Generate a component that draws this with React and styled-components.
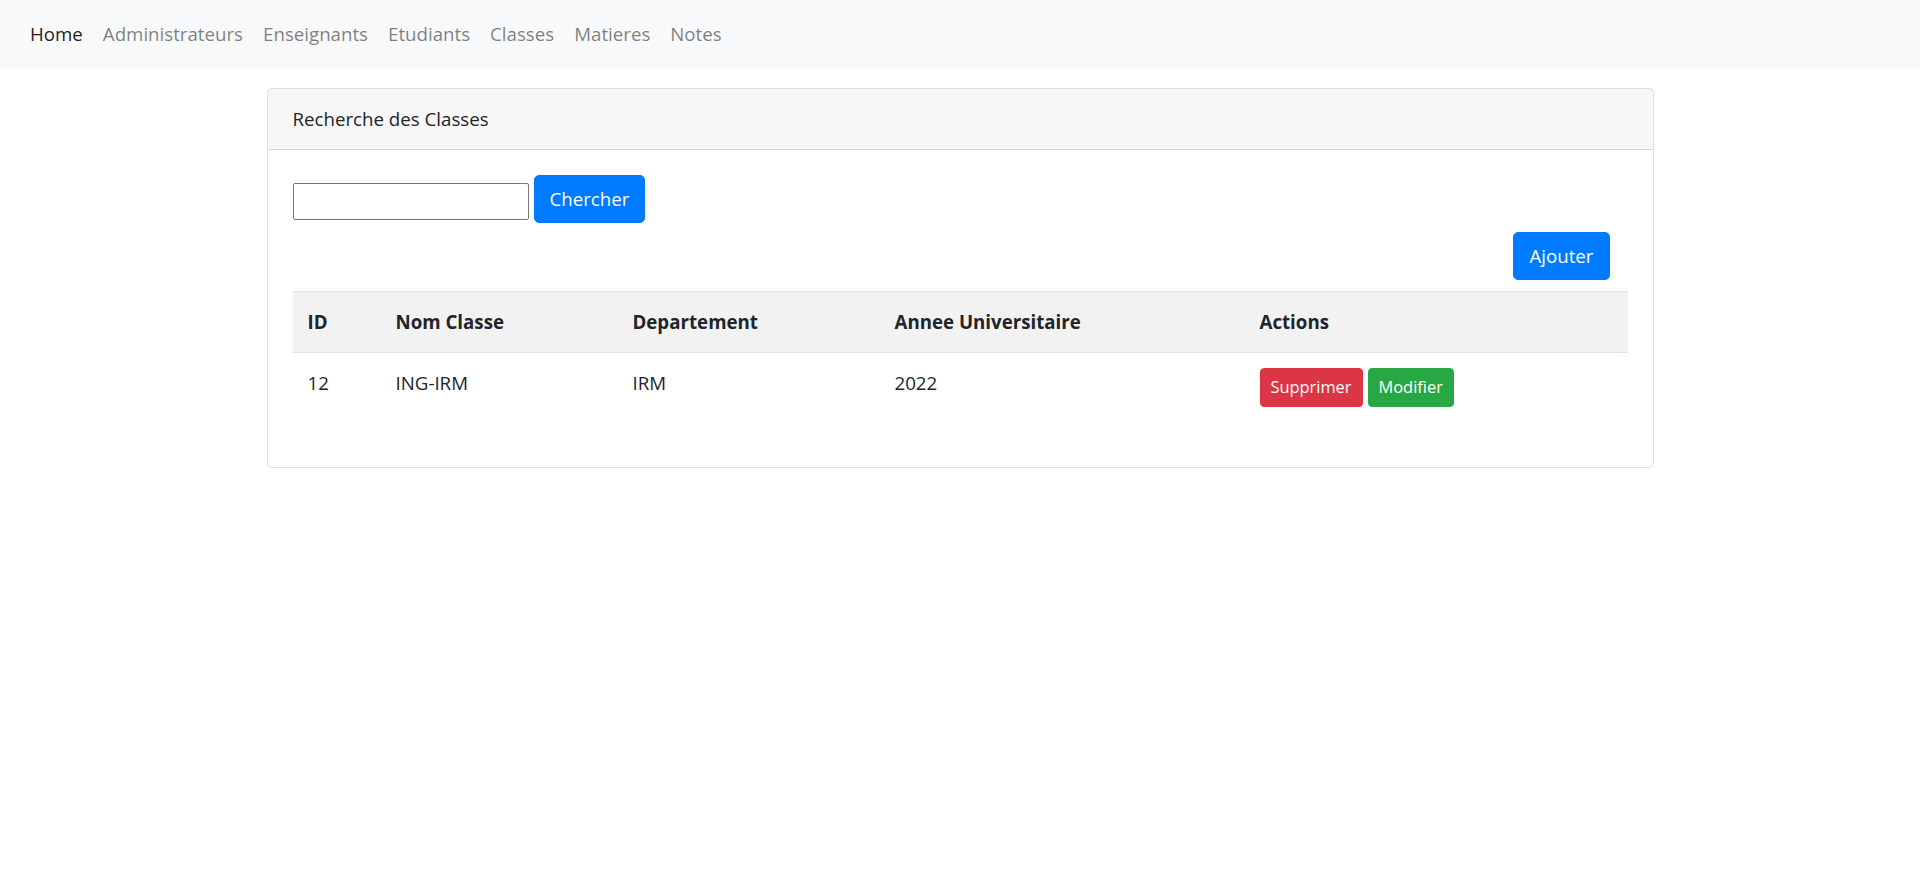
import React from 'react'
import styled, { createGlobalStyle } from 'styled-components'

const GlobalStyle = createGlobalStyle`
  body {
    margin: 0;
    font-family: 'Open Sans', 'Noto Sans', sans-serif;
    font-size: 18.7px;
    line-height: 30px;
    color: #212529;
    background: #ffffff;
  }
  * {
    box-sizing: border-box;
  }
`

const links = ['Home', 'Administrateurs', 'Enseignants', 'Etudiants', 'Classes', 'Matieres', 'Notes']

const classes = [{ id: 12, nom: 'ING-IRM', departement: 'IRM', annee: '2022' }]

export default function App() {
  return (
    <>
      <GlobalStyle />
      <NavbarStyled>
        {links.map((l, i) => (
          <NavLinkStyled key={l} $active={i === 0}>
            {l}
          </NavLinkStyled>
        ))}
      </NavbarStyled>
      <Container>
        <Card>
          <CardHeader>Recherche des Classes</CardHeader>
          <CardBody>
            <SearchRow>
              <SearchInput type="text" />
              <Button>Chercher</Button>
            </SearchRow>
            <AddRow>
              <Button>Ajouter</Button>
            </AddRow>
            <Table>
              <thead>
                <tr>
                  <Th width="88">ID</Th>
                  <Th width="237">Nom Classe</Th>
                  <Th width="262">Departement</Th>
                  <Th width="365">Annee Universitaire</Th>
                  <Th>Actions</Th>
                </tr>
              </thead>
              <tbody>
                {classes.map((c) => (
                  <tr key={c.id}>
                    <Td>{c.id}</Td>
                    <Td>{c.nom}</Td>
                    <Td>{c.departement}</Td>
                    <Td>{c.annee}</Td>
                    <Td>
                      <ActionGroup>
                        <SmallButton $variant="danger">Supprimer</SmallButton>
                        <SmallButton $variant="success">Modifier</SmallButton>
                      </ActionGroup>
                    </Td>
                  </tr>
                ))}
              </tbody>
            </Table>
          </CardBody>
        </Card>
      </Container>
    </>
  )
}

const NavbarStyled = styled.nav`
  display: flex;
  align-items: center;
  height: 68px;
  padding: 0 20px;
  background: #f8f9fa;
`
const NavLinkStyled = styled.a`
  padding: 0 10px;
  color: ${(p) => (p.$active ? 'rgba(0, 0, 0, 0.9)' : 'rgba(0, 0, 0, 0.5)')};
  cursor: pointer;
`
const Container = styled.div`
  width: 1425px;
  margin: 20px auto 0;
  padding: 0 19px;
`
const Card = styled.div`
  border: 1px solid rgba(0, 0, 0, 0.125);
  border-radius: 5px;
  background: #fff;
`
const CardHeader = styled.div`
  padding: 15px 25px;
  background: rgba(0, 0, 0, 0.03);
  border-bottom: 1px solid rgba(0, 0, 0, 0.125);
`
const CardBody = styled.div`
  padding: 25px;
`
const SearchRow = styled.div`
  display: flex;
  align-items: center;
  gap: 5px;
`
const SearchInput = styled.input`
  width: 236px;
  height: 37px;
  margin-top: 5px;
  border: 1px solid #767676;
  border-radius: 2px;
  font: inherit;
  font-size: 16px;
`
const Button = styled.button`
  font-family: inherit;
  font-size: 18.7px;
  line-height: 30px;
  padding: 8px 15px;
  color: #fff;
  background: #007bff;
  border: 1px solid #007bff;
  border-radius: 5px;
  cursor: pointer;
`
const AddRow = styled.div`
  display: flex;
  justify-content: flex-end;
  padding-right: 18px;
  margin-top: 9px;
  margin-bottom: 11px;
`
const Table = styled.table`
  width: 100%;
  border-collapse: collapse;
  margin-bottom: 20px;
`
const Th = styled.th`
  text-align: left;
  padding: 15px;
  font-weight: 700;
  background: #f2f2f2;
  border-top: 1px solid #dee2e6;
  border-bottom: 1px solid #dee2e6;
  vertical-align: middle;
`
const Td = styled.td`
  padding: 15px;
  vertical-align: top;
`
const ActionGroup = styled.div`
  display: flex;
  gap: 5px;
`
const SmallButton = styled.button`
  font-family: inherit;
  font-size: 16.4px;
  line-height: 26.5px;
  padding: 5px 10px;
  color: #fff;
  background: ${(p) => (p.$variant === 'danger' ? '#dc3545' : '#28a745')};
  border: 1px solid ${(p) => (p.$variant === 'danger' ? '#dc3545' : '#28a745')};
  border-radius: 4px;
  cursor: pointer;
`
